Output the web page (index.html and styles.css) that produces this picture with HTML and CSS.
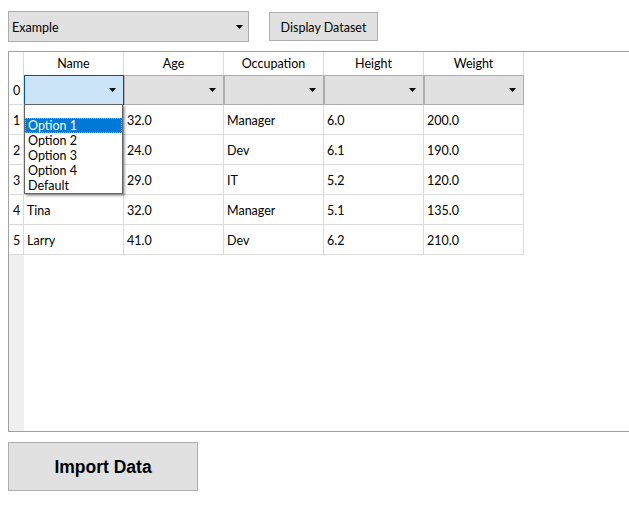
FILE: index.html
```html
<!DOCTYPE html>
<html>
<head>
<meta charset="utf-8">
<link rel="stylesheet" href="styles.css">
</head>
<body>
<div class="app">
  <div class="toolbar">
    <div class="combo combo-main">
      <span class="combo-text">Example</span>
      <svg class="arrow" width="7" height="4" viewBox="0 0 7 4"><polygon points="0,0 7,0 3.5,4" fill="#000"/></svg>
    </div>
    <div class="btn">Display Dataset</div>
  </div>

  <div class="frame">
    <div class="grid">
      <div class="hcell corner"></div>
      <div class="hcell">Name</div>
      <div class="hcell">Age</div>
      <div class="hcell">Occupation</div>
      <div class="hcell">Height</div>
      <div class="hcell">Weight</div>

      <div class="rh">0</div>
      <div class="ccell">
        <div class="combo cell-combo active">
          <svg class="arrow" width="7" height="4" viewBox="0 0 7 4"><polygon points="0,0 7,0 3.5,4" fill="#000"/></svg>
        </div>
        <div class="popup">
          <div class="opt blank"></div>
          <div class="opt sel">Option 1</div>
          <div class="opt">Option 2</div>
          <div class="opt">Option 3</div>
          <div class="opt">Option 4</div>
          <div class="opt">Default</div>
        </div>
      </div>
      <div class="ccell"><div class="combo cell-combo"><svg class="arrow" width="7" height="4" viewBox="0 0 7 4"><polygon points="0,0 7,0 3.5,4" fill="#000"/></svg></div></div>
      <div class="ccell"><div class="combo cell-combo"><svg class="arrow" width="7" height="4" viewBox="0 0 7 4"><polygon points="0,0 7,0 3.5,4" fill="#000"/></svg></div></div>
      <div class="ccell"><div class="combo cell-combo"><svg class="arrow" width="7" height="4" viewBox="0 0 7 4"><polygon points="0,0 7,0 3.5,4" fill="#000"/></svg></div></div>
      <div class="ccell"><div class="combo cell-combo"><svg class="arrow" width="7" height="4" viewBox="0 0 7 4"><polygon points="0,0 7,0 3.5,4" fill="#000"/></svg></div></div>

      <div class="rh">1</div>
      <div class="cell"></div>
      <div class="cell">32.0</div>
      <div class="cell">Manager</div>
      <div class="cell">6.0</div>
      <div class="cell">200.0</div>

      <div class="rh">2</div>
      <div class="cell"></div>
      <div class="cell">24.0</div>
      <div class="cell">Dev</div>
      <div class="cell">6.1</div>
      <div class="cell">190.0</div>

      <div class="rh">3</div>
      <div class="cell"></div>
      <div class="cell">29.0</div>
      <div class="cell">IT</div>
      <div class="cell">5.2</div>
      <div class="cell">120.0</div>

      <div class="rh">4</div>
      <div class="cell">Tina</div>
      <div class="cell">32.0</div>
      <div class="cell">Manager</div>
      <div class="cell">5.1</div>
      <div class="cell">135.0</div>

      <div class="rh">5</div>
      <div class="cell">Larry</div>
      <div class="cell">41.0</div>
      <div class="cell">Dev</div>
      <div class="cell">6.2</div>
      <div class="cell">210.0</div>
    </div>
  </div>

  <div class="import">Import Data</div>
</div>
</body>
</html>
```

FILE: styles.css
```css
html, body {
  margin: 0;
  padding: 0;
  background: #fff;
  overflow: hidden;
}
body {
  font-family: Lato, "Noto Sans", sans-serif;
  font-size: 12.5px;
  color: #000;
}
.app {
  padding: 11px 0 0 8px;
}
.toolbar {
  display: flex;
  align-items: flex-start;
  gap: 20px;
}
.combo {
  box-sizing: border-box;
  display: flex;
  align-items: center;
  justify-content: space-between;
  background: #e1e1e1;
  border: 1px solid #adadad;
}
.combo-main {
  width: 241px;
  height: 31px;
  padding: 0 5px 0 3px;
}
.combo-text {
  padding-top: 2px;
}
.arrow {
  display: block;
  flex: none;
}
.cell-combo {
  width: 100px;
  height: 30px;
  justify-content: flex-end;
  padding-right: 7px;
}
.cell-combo.active {
  background: #cce4f7;
  border-color: #005499;
}
.btn {
  box-sizing: border-box;
  margin-top: 1px;
  width: 109px;
  height: 29px;
  background: #e1e1e1;
  border: 1px solid #adadad;
  display: flex;
  align-items: center;
  justify-content: center;
  padding-top: 2px;
}
.frame {
  box-sizing: border-box;
  margin-top: 9px;
  width: 621px;
  height: 381px;
  border: 1px solid #a0a0a0;
  border-right: none;
  background: linear-gradient(to right, #f0f0f0 15px, #fff 15px);
}
.grid {
  display: grid;
  grid-template-columns: 15px repeat(5, 100px);
  grid-template-rows: 23px repeat(6, 30px);
}
.hcell {
  box-sizing: border-box;
  background: #fff;
  border-right: 1px solid #dadada;
  display: flex;
  align-items: center;
  justify-content: center;
}
.rh {
  box-sizing: border-box;
  background: #fff;
  border-right: 1px solid #dadada;
  border-bottom: 1px solid #dadada;
  display: flex;
  align-items: center;
  padding-left: 4px;
  padding-top: 2px;
}
.ccell {
  position: relative;
}
.cell {
  box-sizing: border-box;
  background: #fff;
  border-right: 1px solid #dadada;
  border-bottom: 1px solid #dadada;
  display: flex;
  align-items: center;
  padding-left: 3px;
  padding-top: 2px;
}
.popup {
  position: absolute;
  top: 29px;
  left: 0;
  width: 99px;
  box-sizing: border-box;
  background: #fff;
  border: 1px solid #646464;
  box-shadow: 2px 2px 2px rgba(0, 0, 0, 0.35);
  z-index: 2;
}
.opt {
  height: 15px;
  line-height: 15px;
  padding-left: 3px;
  box-sizing: border-box;
}
.opt.blank {
  height: 13px;
}
.opt.sel {
  background: #0078d7;
  color: #fff;
  border: 1px dotted #e8a25a;
  padding-left: 2px;
  line-height: 13px;
}
.import {
  box-sizing: border-box;
  margin-top: 10px;
  width: 190px;
  height: 49px;
  background: #e1e1e1;
  border: 1px solid #adadad;
  display: flex;
  align-items: center;
  justify-content: center;
  font-family: "Liberation Sans", Arial, sans-serif;
  font-weight: bold;
  font-size: 17.5px;
  padding-top: 2px;
}
```
